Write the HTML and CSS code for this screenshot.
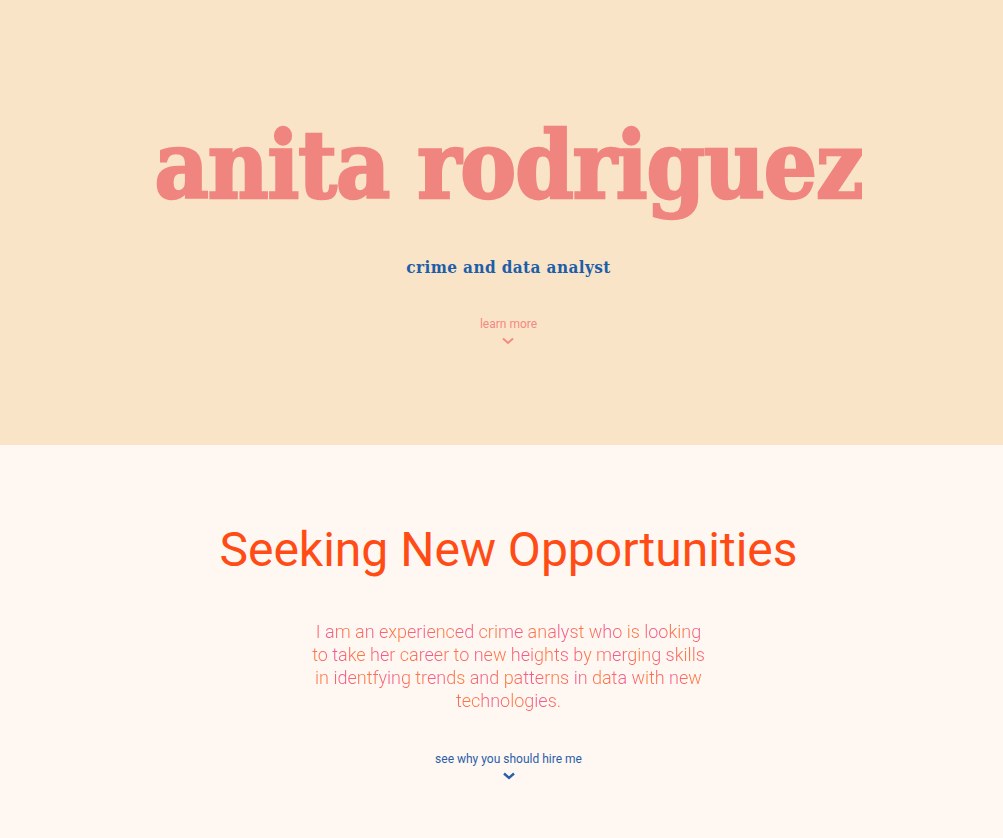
FILE: index.html
```html
<!DOCTYPE html>
<html lang="en">
<head>
<meta charset="utf-8">
<title>anita rodriguez</title>
<link rel="stylesheet" href="styles.css">
</head>
<body>
<header class="hero">
  <h1 class="name">anita rodriguez</h1>
  <p class="role">crime and data analyst</p>
  <a class="more more-hero" href="#about">
    <span>learn more</span>
    <svg class="chev" width="12" height="8" viewBox="0 0 12 8"><path d="M1 1.5 L6 6 L11 1.5" fill="none" stroke="currentColor" stroke-width="2"/></svg>
  </a>
</header>
<section class="about" id="about">
  <h2 class="title">Seeking New Opportunities</h2>
  <p class="intro">I am an experienced crime analyst who is looking to take her career to new heights by merging skills in identfying trends and patterns in data with new technologies.</p>
  <a class="more more-about" href="#hire">
    <span>see why you should hire me</span>
    <svg class="chev" width="12" height="8" viewBox="0 0 12 8"><path d="M1 1.5 L6 6 L11 1.5" fill="none" stroke="currentColor" stroke-width="2.4"/></svg>
  </a>
</section>
</body>
</html>
```

FILE: styles.css
```css
* { box-sizing: border-box; }
html, body { margin: 0; padding: 0; }
body {
  font-family: Roboto, "Liberation Sans", sans-serif;
  background: #fff8f2;
}
.hero {
  background: #fae4c8;
  height: 445px;
  display: flex;
  flex-direction: column;
  align-items: center;
  padding: 110px 0 0 14px;
}
.name {
  margin: 0;
  font-family: "DejaVu Serif Condensed", "DejaVu Serif", serif;
  font-weight: 700;
  font-size: 93px;
  line-height: 112px;
  color: #f08580;
  -webkit-text-stroke: 2.5px #f08580;
  letter-spacing: -1px;
}
.role {
  margin: 34px 0 0;
  font-family: "DejaVu Serif Condensed", "DejaVu Serif", serif;
  font-weight: 700;
  font-size: 17px;
  line-height: 22px;
  color: #1d5ea8;
  letter-spacing: 0.4px;
}
.more {
  display: flex;
  flex-direction: column;
  align-items: center;
  text-decoration: none;
  font-size: 12px;
  line-height: 14px;
}
.more-hero { color: #f28a82; margin-top: 39px; }
.more-about { color: #2b5ea8; margin-top: 40px; }
.chev { margin-top: 6px; display: block; }
.about {
  display: flex;
  flex-direction: column;
  align-items: center;
  padding: 77px 0 0 14px;
  min-height: 393px;
}
.title {
  margin: 0;
  font-weight: 400;
  font-size: 48px;
  line-height: 56px;
  color: #ff4c16;
}
.intro {
  margin: 42px 0 0;
  width: 400px;
  text-align: center;
  font-weight: 300;
  font-size: 18px;
  line-height: 23px;
  background: repeating-linear-gradient(70deg, #f25892 0px, #ff7a3a 22px, #f25892 44px);
  -webkit-background-clip: text;
  background-clip: text;
  color: transparent;
}
```
